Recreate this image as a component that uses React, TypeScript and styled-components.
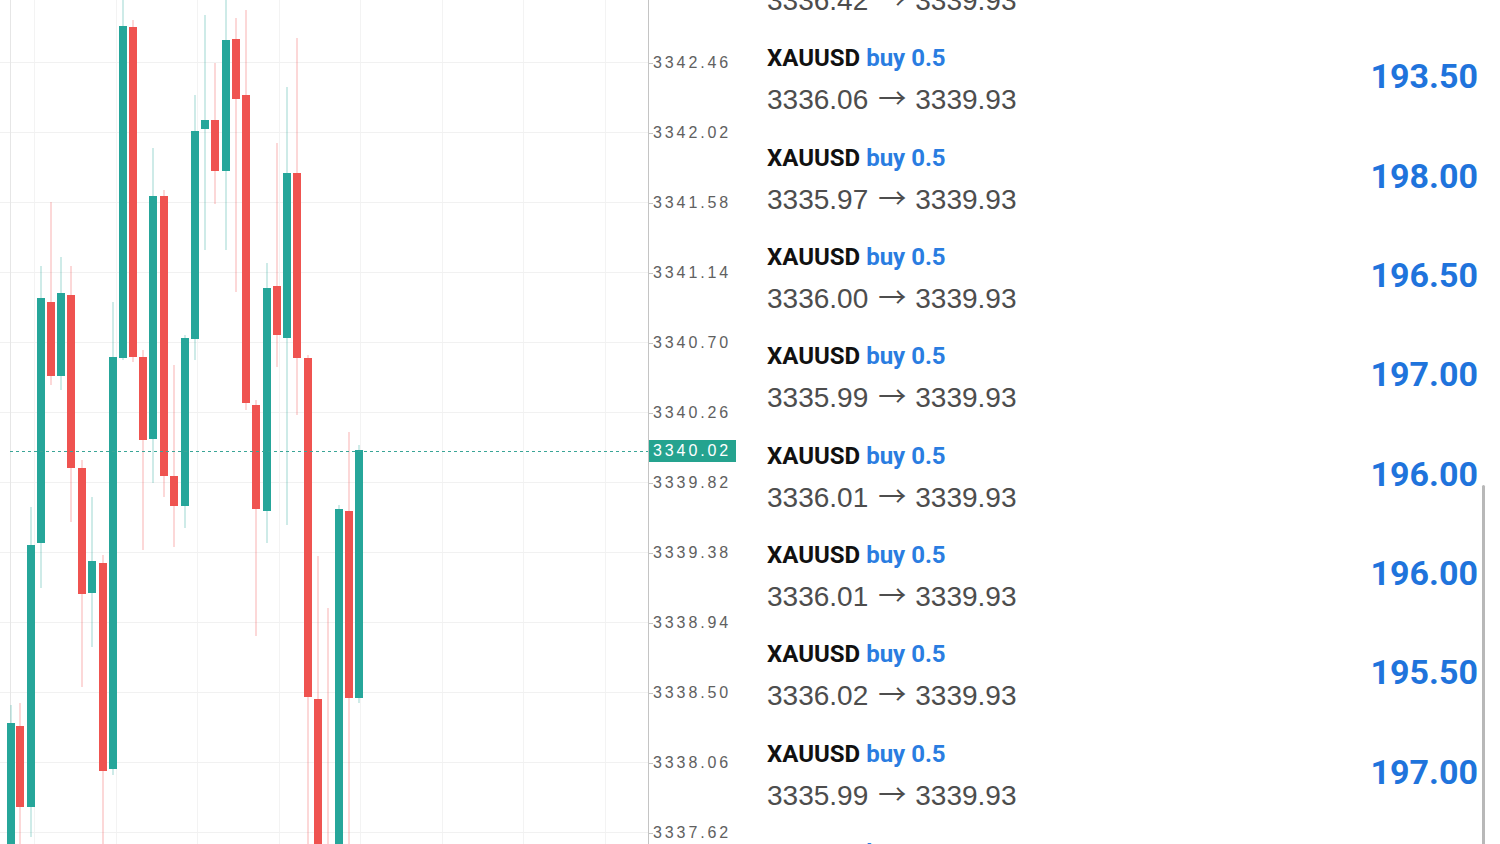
import React from "react";
import styled, { createGlobalStyle } from "styled-components";

const GlobalStyle = createGlobalStyle`
  html, body { margin: 0; padding: 0; background: #ffffff; }
  body { width: 1500px; height: 844px; overflow: hidden; font-family: "Liberation Sans", Arial, sans-serif; }
  #root { width: 1500px; height: 844px; }
`;

const UP = "#26a69a";
const DOWN = "#ef5350";

type Candle = { x: number; up: boolean; bt: number; bb: number; wt: number; wb: number };

const candles: Candle[] = [
  { x: 7, up: true, bt: 723, bb: 860, wt: 705, wb: 860 },
  { x: 16, up: false, bt: 726, bb: 807, wt: 703, wb: 860 },
  { x: 27, up: true, bt: 545, bb: 807, wt: 507, wb: 837 },
  { x: 37, up: true, bt: 298, bb: 543, wt: 266, wb: 588 },
  { x: 47, up: false, bt: 302, bb: 376, wt: 202, wb: 385 },
  { x: 57, up: true, bt: 293, bb: 376, wt: 257, wb: 390 },
  { x: 67, up: false, bt: 295, bb: 468, wt: 266, wb: 522 },
  { x: 78, up: false, bt: 468, bb: 594, wt: 460, wb: 687 },
  { x: 88, up: true, bt: 561, bb: 593, wt: 497, wb: 647 },
  { x: 99, up: false, bt: 563, bb: 771, wt: 555, wb: 860 },
  { x: 109, up: true, bt: 357, bb: 769, wt: 302, wb: 775 },
  { x: 119, up: true, bt: 26, bb: 358, wt: 0, wb: 360 },
  { x: 129, up: false, bt: 27, bb: 357, wt: 20, wb: 362 },
  { x: 139, up: false, bt: 357, bb: 440, wt: 350, wb: 550 },
  { x: 149, up: true, bt: 196, bb: 439, wt: 148, wb: 483 },
  { x: 160, up: false, bt: 196, bb: 476, wt: 190, wb: 497 },
  { x: 170, up: false, bt: 476, bb: 506, wt: 365, wb: 547 },
  { x: 181, up: true, bt: 338, bb: 506, wt: 335, wb: 528 },
  { x: 191, up: true, bt: 131, bb: 339, wt: 95, wb: 360 },
  { x: 201, up: true, bt: 120, bb: 129, wt: 15, wb: 250 },
  { x: 211, up: false, bt: 120, bb: 171, wt: 63, wb: 204 },
  { x: 222, up: true, bt: 40, bb: 171, wt: 0, wb: 250 },
  { x: 232, up: false, bt: 39, bb: 99, wt: 18, wb: 292 },
  { x: 242, up: false, bt: 95, bb: 403, wt: 10, wb: 410 },
  { x: 252, up: false, bt: 405, bb: 509, wt: 400, wb: 636 },
  { x: 263, up: true, bt: 288, bb: 511, wt: 263, wb: 543 },
  { x: 273, up: false, bt: 286, bb: 335, wt: 143, wb: 367 },
  { x: 283, up: true, bt: 173, bb: 338, wt: 87, wb: 525 },
  { x: 293, up: false, bt: 173, bb: 358, wt: 38, wb: 415 },
  { x: 304, up: false, bt: 358, bb: 697, wt: 355, wb: 860 },
  { x: 314, up: false, bt: 699, bb: 860, wt: 556, wb: 860 },
  { x: 324, up: false, bt: 855, bb: 860, wt: 608, wb: 860 },
  { x: 335, up: true, bt: 509, bb: 860, wt: 505, wb: 860 },
  { x: 345, up: false, bt: 511, bb: 698, wt: 432, wb: 860 },
  { x: 355, up: true, bt: 450, bb: 698, wt: 445, wb: 703 },
];

const gridYs = [62, 132, 202, 272, 342, 412, 482, 552, 622, 692, 762, 832];
const gridXs = [34, 116, 197, 279, 360, 442, 523, 605];

const axisLabels = [
  "3342.90", "3342.46", "3342.02", "3341.58", "3341.14", "3340.70", "3340.26",
  "3339.82", "3339.38", "3338.94", "3338.50", "3338.06", "3337.62",
];

type Trade = { from: string; value: string };
const trades: Trade[] = [
  { from: "3336.42", value: "194.50" },
  { from: "3336.06", value: "193.50" },
  { from: "3335.97", value: "198.00" },
  { from: "3336.00", value: "196.50" },
  { from: "3335.99", value: "197.00" },
  { from: "3336.01", value: "196.00" },
  { from: "3336.01", value: "196.00" },
  { from: "3336.02", value: "195.50" },
  { from: "3335.99", value: "197.00" },
  { from: "3336.00", value: "196.50" },
];

const Screen = styled.div`
  display: flex;
  width: 1500px;
  height: 844px;
  overflow: hidden;
  background: #ffffff;
  position: relative;
`;

const ChartPane = styled.div`
  flex: 0 0 648px;
  height: 844px;
  overflow: hidden;
`;

const PriceAxis = styled.div`
  flex: 0 0 92px;
  height: 844px;
  border-left: 1px solid #c4c4c4;
  position: relative;
  overflow: hidden;
  display: flex;
  flex-direction: column;
`;

const AxisLabels = styled.div`
  display: flex;
  flex-direction: column;
  margin-top: -42px;
`;

const AxisLabel = styled.div`
  height: 70px;
  display: flex;
  align-items: center;
  position: relative;
  padding-left: 4px;
  font-family: "Liberation Sans", Arial, sans-serif;
  font-size: 16px;
  letter-spacing: 2.9px;
  color: #606060;

  &::before {
    content: "";
    position: absolute;
    left: 0;
    top: 50%;
    width: 4px;
    height: 1px;
    background: #c4c4c4;
  }
`;

const PriceBadge = styled.div`
  position: absolute;
  left: 0;
  top: 440px;
  width: 87px;
  height: 22px;
  background: #25a38f;
  color: #ffffff;
  font-family: "Liberation Sans", Arial, sans-serif;
  font-size: 16px;
  letter-spacing: 2.9px;
  display: flex;
  align-items: center;
  padding-left: 4px;
  box-sizing: border-box;
`;

const TradeList = styled.div`
  flex: 1;
  height: 844px;
  overflow: hidden;
  position: relative;
  padding: 0 22px 0 26px;
`;

const ListInner = styled.div`
  display: flex;
  flex-direction: column;
  margin-top: -69px;
`;

const Row = styled.div`
  display: grid;
  grid-template-columns: 1fr auto;
  align-items: center;
  height: 99.3px;
`;

const Info = styled.div`
  display: flex;
  flex-direction: column;
  gap: 4px;
`;

const Title = styled.div`
  font-family: Roboto, "Noto Sans", sans-serif;
  font-weight: 700;
  font-size: 24px;
  line-height: 34px;
  color: #111111;
  white-space: nowrap;
  margin-top: 2px;
`;

const Side = styled.span`
  color: #2a7de1;
`;

const Prices = styled.div`
  font-family: "Liberation Sans", Arial, sans-serif;
  font-size: 28px;
  line-height: 40px;
  color: #4d4d4d;
  white-space: nowrap;
  margin-top: -2px;
`;

const Arrow = styled.span`
  font-family: "Noto Sans CJK SC", "DejaVu Sans", sans-serif;
  font-size: 28px;
  color: #4d4d4d;
  margin: 0 9px 0 10px;
`;

const Profit = styled.div`
  font-family: Roboto, "Noto Sans", sans-serif;
  font-weight: 700;
  font-size: 34px;
  line-height: 40px;
  color: #1f74dc;
  margin-bottom: 7px;
`;

const ScrollThumb = styled.div`
  position: absolute;
  right: 15px;
  top: 485px;
  width: 3px;
  height: 380px;
  background: #b8b8b8;
  border-radius: 2px;
`;

function Chart() {
  return (
    <svg width={648} height={844} viewBox="0 0 648 844">
      {gridXs.map((x) => (
        <line key={"gx" + x} x1={x + 0.5} x2={x + 0.5} y1={0} y2={844} stroke="#f3f3f3" strokeWidth={1} />
      ))}
      {gridYs.map((y) => (
        <line key={"gy" + y} x1={0} x2={648} y1={y + 0.5} y2={y + 0.5} stroke="#f1f1f1" strokeWidth={1} />
      ))}
      <line x1={10.5} x2={10.5} y1={0} y2={844} stroke="#e6e6e6" strokeWidth={1} />
      {candles.map((c, i) => {
        const col = c.up ? UP : DOWN;
        const cx = c.x + 4;
        return (
          <g key={i}>
            <line x1={cx} x2={cx} y1={c.wt} y2={c.wb} stroke={col} strokeOpacity={0.45} strokeWidth={1} />
            <rect x={c.x} y={c.bt} width={8} height={Math.max(c.bb - c.bt, 1)} fill={col} />
          </g>
        );
      })}
      <line x1={10} x2={648} y1={451.5} y2={451.5} stroke="#3aa597" strokeWidth={1.2} strokeDasharray="3 3" />
    </svg>
  );
}

export default function App() {
  return (
    <>
      <GlobalStyle />
      <Screen>
        <ChartPane>
          <Chart />
        </ChartPane>
        <PriceAxis>
          <AxisLabels>
            {axisLabels.map((l) => (
              <AxisLabel key={l}>{l}</AxisLabel>
            ))}
          </AxisLabels>
          <PriceBadge>3340.02</PriceBadge>
        </PriceAxis>
        <TradeList>
          <ListInner>
            {trades.map((t, i) => (
              <Row key={i}>
                <Info>
                  <Title>
                    XAUUSD <Side>buy 0.5</Side>
                  </Title>
                  <Prices>
                    {t.from}
                    <Arrow>→</Arrow>
                    3339.93
                  </Prices>
                </Info>
                <Profit>{t.value}</Profit>
              </Row>
            ))}
          </ListInner>
          <ScrollThumb />
        </TradeList>
      </Screen>
    </>
  );
}
